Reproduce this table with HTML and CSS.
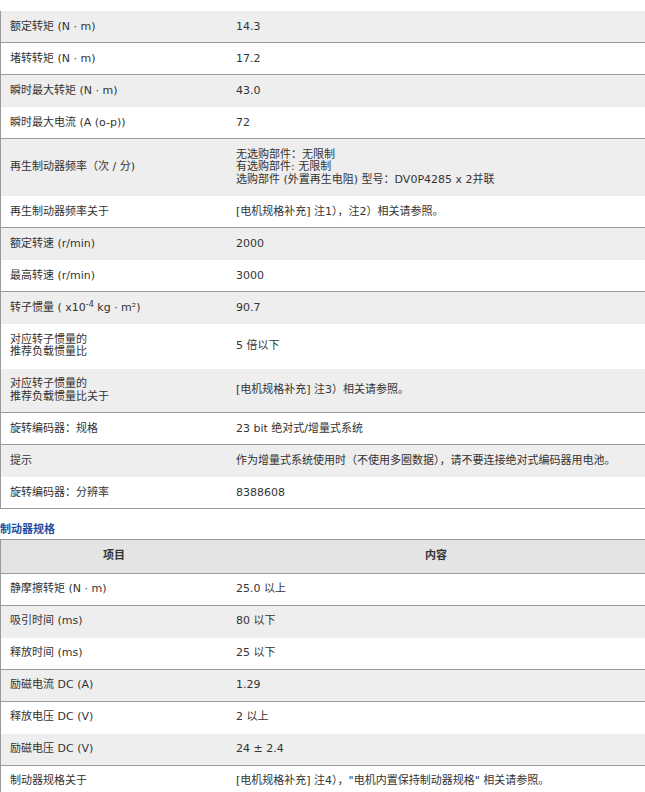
FILE: index.html
```html
<!DOCTYPE html>
<html lang="zh-CN">
<head>
<meta charset="utf-8">
<title>规格</title>
<link rel="stylesheet" href="styles.css">
</head>
<body>
<div class="spec">
  <div class="row g ln"><div class="c">额定转矩 (N · m)</div><div class="c">14.3</div></div>
  <div class="row ln"><div class="c">堵转转矩 (N · m)</div><div class="c">17.2</div></div>
  <div class="row g"><div class="c">瞬时最大转矩 (N · m)</div><div class="c">43.0</div></div>
  <div class="row ln"><div class="c">瞬时最大电流 (A (o-p))</div><div class="c">72</div></div>
  <div class="row g"><div class="c">再生制动器频率（次 / 分)</div><div class="c">无选购部件：无限制<br>有选购部件: 无限制<br>选购部件 (外置再生电阻) 型号：DV0P4285 x 2并联</div></div>
  <div class="row ln"><div class="c">再生制动器频率关于</div><div class="c">[电机规格补充] 注1），注2）相关请参照。</div></div>
  <div class="row g"><div class="c">额定转速 (r/min)</div><div class="c">2000</div></div>
  <div class="row ln"><div class="c">最高转速 (r/min)</div><div class="c">3000</div></div>
  <div class="row g"><div class="c">转子惯量 ( x10<sup>-4</sup> kg · m²)</div><div class="c">90.7</div></div>
  <div class="row"><div class="c">对应转子惯量的<br>推荐负载惯量比</div><div class="c">5 倍以下</div></div>
  <div class="row g ln"><div class="c">对应转子惯量的<br>推荐负载惯量比关于</div><div class="c">[电机规格补充] 注3）相关请参照。</div></div>
  <div class="row ln"><div class="c">旋转编码器：规格</div><div class="c">23 bit 绝对式/增量式系统</div></div>
  <div class="row g"><div class="c">提示</div><div class="c">作为增量式系统使用时（不使用多圈数据），请不要连接绝对式编码器用电池。</div></div>
  <div class="row ln"><div class="c">旋转编码器：分辨率</div><div class="c">8388608</div></div>
</div>

<h2 class="title">制动器规格</h2>

<div class="spec">
  <div class="row head ln top"><div class="c">项目</div><div class="c">内容</div></div>
  <div class="row ln"><div class="c">静摩擦转矩 (N · m)</div><div class="c">25.0 以上</div></div>
  <div class="row g"><div class="c">吸引时间 (ms)</div><div class="c">80 以下</div></div>
  <div class="row ln"><div class="c">释放时间 (ms)</div><div class="c">25 以下</div></div>
  <div class="row g ln"><div class="c">励磁电流 DC (A)</div><div class="c">1.29</div></div>
  <div class="row"><div class="c">释放电压 DC (V)</div><div class="c">2 以上</div></div>
  <div class="row g ln"><div class="c">励磁电压 DC (V)</div><div class="c">24 ± 2.4</div></div>
  <div class="row"><div class="c">制动器规格关于</div><div class="c">[电机规格补充] 注4），"电机内置保持制动器规格" 相关请参照。</div></div>
</div>
</body>
</html>
```

FILE: styles.css
```css
html, body {
  margin: 0;
  padding: 0;
  background: #ffffff;
  overflow: hidden;
}

body {
  padding-top: 11px;
  font-family: "DejaVu Sans", "Noto Sans CJK SC", sans-serif;
  font-size: 11px;
  line-height: 12.5px;
  color: #333333;
}

.spec {
  border-left: 1px solid #9a9a9a;
  width: 644px;
}

.row {
  display: grid;
  grid-template-columns: 226px 1fr;
  align-items: center;
  background: #ffffff;
  border-bottom: 1px solid transparent;
}

.row.g {
  background: #eeeeee;
  border-bottom-color: #eeeeee;
}

.row.ln {
  border-bottom-color: #9a9a9a;
}

.row.top {
  border-top: 1px solid #9a9a9a;
}

.c {
  padding: 9.5px 9px 9px 9px;
}

.c sup {
  font-size: 8px;
  line-height: 0;
  vertical-align: 4px;
}

.row.head {
  background: #e4e4e4;
  font-weight: bold;
  text-align: center;
}

.row.head .c {
  padding-top: 10px;
  padding-bottom: 10px;
}

.title {
  margin: 15px 0 3px 0;
  font-size: 11px;
  line-height: 12px;
  font-weight: bold;
  color: #1f4fa3;
}
```
